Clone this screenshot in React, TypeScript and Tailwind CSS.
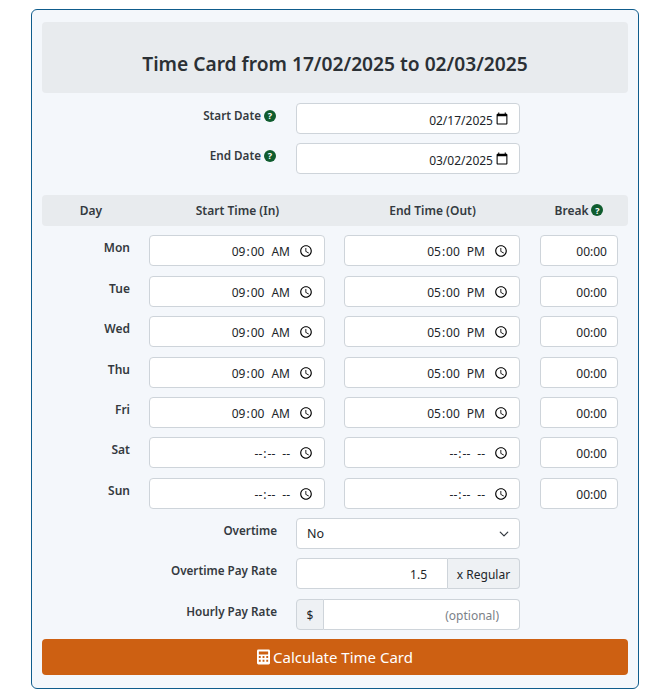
import React from 'react'

const inputCls = "h-[31px] w-full rounded-[4px] border border-[#ced4da] bg-white pl-2 pr-2 text-right text-[12px] text-[#212529] outline-none"
const fieldCls = "[&::-webkit-datetime-edit]:relative [&::-webkit-datetime-edit]:w-full [&::-webkit-datetime-edit]:justify-end [&::-webkit-calendar-picker-indicator]:h-[14px] [&::-webkit-calendar-picker-indicator]:w-[14px]"
const dateCls = `${fieldCls} [&::-webkit-datetime-edit]:top-[2px] [&::-webkit-datetime-edit-month-field]:p-0 [&::-webkit-datetime-edit-day-field]:p-0 [&::-webkit-datetime-edit-year-field]:p-0 [&::-webkit-calendar-picker-indicator]:ml-0`
const timeCls = `${fieldCls} [&::-webkit-datetime-edit]:top-[1px] [&::-webkit-datetime-edit-ampm-field]:ml-[3px] [&::-webkit-calendar-picker-indicator]:ml-[5px]`

const rows = [
  { day: 'Mon', start: '09:00', end: '17:00', gap: 'mb-[10px]' },
  { day: 'Tue', start: '09:00', end: '17:00', gap: 'mb-[9px]' },
  { day: 'Wed', start: '09:00', end: '17:00', gap: 'mb-[10px]' },
  { day: 'Thu', start: '09:00', end: '17:00', gap: 'mb-[9px]' },
  { day: 'Fri', start: '09:00', end: '17:00', gap: 'mb-[9px]' },
  { day: 'Sat', start: '', end: '', gap: 'mb-[10px]' },
  { day: 'Sun', start: '', end: '', gap: 'mb-[9px]' },
]

const Help = () => (
  <span className="ml-[3px] inline-flex h-3 w-3 items-center justify-center rounded-full bg-[#0f5c2e] align-[1px] text-[9px] font-bold leading-none text-white">?</span>
)

const FormRow = ({ label, help, className, children }: { label: string; help?: boolean; className: string; children: React.ReactNode }) => (
  <div className={`flex ${className}`}>
    <label className={`w-[235px] pt-[3px] text-right text-[11.7px] font-semibold leading-[18px] text-[#343a40] ${help ? 'pr-[1px]' : ''}`}>
      {label}
      {help && <Help />}
    </label>
    <div className="ml-[19px] w-[224px]">{children}</div>
  </div>
)

export default function App() {
  return (
    <div className="min-h-[697px] bg-white pl-[31px] pr-[18px] pt-[9px] font-['Noto_Sans','Open_Sans',sans-serif]">
      <div className="h-[680px] rounded-[6px] border border-[#0f5c8c] bg-[#f4f7fb] px-[10px] pt-[12px]">
        <div className="mb-[10px] flex h-[71px] items-end justify-center rounded-[4px] bg-[#e8ebee] pb-[16px]">
          <h1 className="text-[19.2px] font-semibold leading-[26px] text-[#2b3035]">Time Card from 17/02/2025 to 02/03/2025</h1>
        </div>

        <FormRow label="Start Date" help className="mb-[9px]">
          <input type="date" defaultValue="2025-02-17" className={`${inputCls} ${dateCls}`} />
        </FormRow>
        <FormRow label="End Date" help className="mb-[21px]">
          <input type="date" defaultValue="2025-03-02" className={`${inputCls} ${dateCls}`} />
        </FormRow>

        <div className="mb-[9px] flex h-[31px] items-center rounded-[4px] bg-[#e8ebee] text-[12px] font-semibold text-[#343a40]">
          <div className="w-[98px] text-center">Day</div>
          <div className="w-[195px] text-center">Start Time (In)</div>
          <div className="w-[195px] text-center">End Time (Out)</div>
          <div className="w-[98px] text-center">Break<Help /></div>
        </div>

        {rows.map((r) => (
          <div key={r.day} className={`flex pl-[31px] ${r.gap}`}>
            <div className="w-[76px] pr-[19px] pt-[4px] text-right text-[12px] font-semibold leading-[18px] text-[#343a40]">{r.day}</div>
            <input type="time" defaultValue={r.start} className={`${inputCls} ${timeCls} !w-[176px]`} />
            <input type="time" defaultValue={r.end} className={`${inputCls} ${timeCls} ml-[19px] !w-[176px]`} />
            <input type="text" defaultValue="00:00" className={`${inputCls} ml-[20px] !w-[78px] pr-[10px] pt-[2px]`} />
          </div>
        ))}

        <FormRow label="Overtime" className="mb-[9px]">
          <div className="relative h-[31px]">
            <div className="flex h-[31px] items-center rounded-[4px] border border-[#ced4da] bg-white pl-[10px] pt-[2px] text-[12.5px] text-[#212529]">No</div>
            <svg className="absolute right-[11px] top-[11px] h-[10px] w-[10px]" viewBox="0 0 16 16" fill="none" stroke="#343a40" strokeWidth="2" strokeLinecap="round" strokeLinejoin="round">
              <path d="m2 5 6 6 6-6" />
            </svg>
          </div>
        </FormRow>
        <FormRow label="Overtime Pay Rate" className="mb-[10px]">
          <div className="flex h-[31px] text-[12px]">
            <input type="text" defaultValue="1.5" className="h-[31px] w-[152px] rounded-l-[4px] border border-[#ced4da] bg-white pr-[20px] pt-[2px] text-right text-[#212529] outline-none" />
            <div className="flex h-[31px] flex-1 items-center justify-center rounded-r-[4px] border border-l-0 border-[#ced4da] bg-[#eef1f4] pt-[2px] text-[12px] text-[#212529]">x Regular</div>
          </div>
        </FormRow>
        <FormRow label="Hourly Pay Rate" className="mb-[9px]">
          <div className="flex h-[31px] text-[12px]">
            <div className="flex h-[31px] w-[28px] items-center justify-center rounded-l-[4px] border border-[#ced4da] bg-[#eef1f4] pt-[2px] text-[#212529]">$</div>
            <input type="text" placeholder="(optional)" className="h-[31px] flex-1 min-w-0 rounded-r-[4px] border border-l-0 border-[#ced4da] bg-white pr-[20px] pt-[2px] text-right outline-none placeholder:text-[#7b8188]" />
          </div>
        </FormRow>

        <button className="flex h-[36px] w-full items-center justify-center gap-[3px] rounded-[4px] bg-[#cd6012] text-[15px] text-white">
          <svg className="h-[16px] w-[13px]" viewBox="0 0 448 512" fill="currentColor">
            <path fillRule="evenodd" d="M48 0h352a48 48 0 0 1 48 48v416a48 48 0 0 1-48 48H48a48 48 0 0 1-48-48V48A48 48 0 0 1 48 0zm24 64a8 8 0 0 0-8 8v88a8 8 0 0 0 8 8h304a8 8 0 0 0 8-8V72a8 8 0 0 0-8-8H72zm-8 160v64h64v-64H64zm128 0v64h64v-64h-64zm128 0v64h64v-64h-64zM64 352v64h64v-64H64zm128 0v64h64v-64h-64zm128 0v64h64v-64h-64z" />
          </svg>
          Calculate Time Card
        </button>
      </div>
    </div>
  )
}
